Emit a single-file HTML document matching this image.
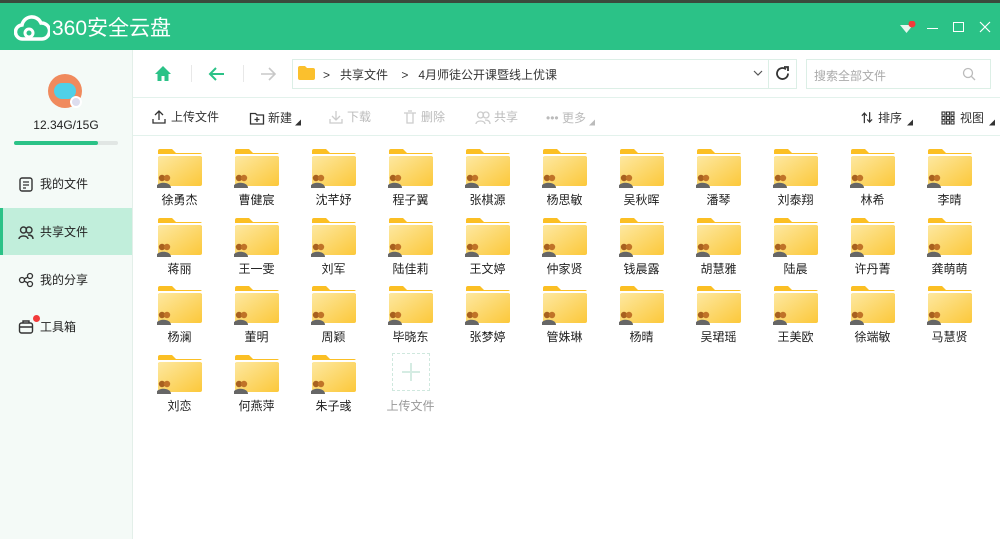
<!DOCTYPE html><html><head><meta charset="utf-8"><style>
*{margin:0;padding:0;box-sizing:border-box}
body{width:1000px;height:539px;overflow:hidden;font-family:"Liberation Sans","Noto Sans CJK SC",sans-serif;font-size:12px;color:#333;background:#fff;position:relative}
.abs{position:absolute}
#top{left:0;top:0;width:1000px;height:3px;background:#3a4a3c}
#title{left:0;top:3px;width:1000px;height:47px;background:#2bc287}
#side{left:0;top:50px;width:133px;height:489px;background:#f4faf7;border-right:1px solid #e3efe9}
.nav{position:absolute;left:0;width:132px;height:47px;display:flex;align-items:center;padding-left:18px;font-size:12px;color:#222}
.nav svg{margin-right:6px}
.tb{position:absolute;top:108px;display:flex;align-items:center;font-size:12px;color:#333}
.tb.dis{color:#bbb}
.f{position:absolute;width:77px;text-align:center}
.f svg{display:block;margin:0 auto}
.f span{display:block;margin-top:3px;font-size:12px;color:#222}
</style></head><body>
<div id="top" class="abs"></div>
<div id="title" class="abs">
<svg class="abs" style="left:14px;top:10px" width="36" height="30" viewBox="0 0 36 30"><path d="M9 26a7 7 0 0 1-1-14 10 10 0 0 1 19-2 8 8 0 0 1 1 16z" fill="none" stroke="#fff" stroke-width="3.5"/><circle cx="15" cy="20" r="4" fill="none" stroke="#fff" stroke-width="3"/></svg>
<div class="abs" style="left:52px;top:9px;color:#fff;font-size:21px;letter-spacing:0px">360安全云盘</div>
<svg class="abs" style="left:898px;top:18px" width="20" height="16"><path d="M2 4h13L8.5 12z" fill="#e6f7ef"/><path d="M2 3h13" stroke="#2bc287" stroke-width="2"/><circle cx="14" cy="3" r="3.5" fill="#f23a3a"/></svg>
<div class="abs" style="left:927px;top:25px;width:11px;height:1px;background:#fff"></div>
<div class="abs" style="left:953px;top:19px;width:11px;height:10px;border:1px solid #fff"></div>
<svg class="abs" style="left:979px;top:18px" width="12" height="12"><path d="M1 1l10 10M11 1L1 11" stroke="#fff" stroke-width="1.2"/></svg>
</div>
<div id="side" class="abs">
<div class="abs" style="left:48px;top:24px;width:34px;height:34px;border-radius:50%;background:#f08a5d"></div>
<div class="abs" style="left:54px;top:33px;width:22px;height:16px;border-radius:8px;background:#4fd0e8"></div>
<div class="abs" style="left:70px;top:46px;width:12px;height:12px;border-radius:50%;background:#dde;border:2px solid #fff"></div>
<div class="abs" style="left:0;top:68px;width:132px;text-align:center;font-size:12px;color:#222">12.34G/15G</div>
<div class="abs" style="left:14px;top:91px;width:104px;height:4px;border-radius:2px;background:#e1e6e4"><div style="width:84px;height:4px;border-radius:2px;background:#2bc287"></div></div>
<div class="nav" style="top:110px"><svg width="16" height="16"><rect x="2" y="2" width="12" height="13" rx="2" fill="none" stroke="#333" stroke-width="1.4"/><path d="M5 6h6M5 9h6M5 12h3" stroke="#333" stroke-width="1.3"/></svg>我的文件</div>
<div class="nav" style="top:158px;background:#c1eedb;border-left:3px solid #2bc287;padding-left:15px"><svg width="16" height="16"><circle cx="5.5" cy="6" r="3" fill="none" stroke="#333" stroke-width="1.4"/><circle cx="11" cy="6" r="3" fill="none" stroke="#333" stroke-width="1.4"/><path d="M1 15c0-4 9-4 9 0M10 11c3 0 5 1 5 4" fill="none" stroke="#333" stroke-width="1.4"/></svg>共享文件</div>
<div class="nav" style="top:206px"><svg width="16" height="16"><circle cx="4" cy="8" r="2.5" fill="none" stroke="#333" stroke-width="1.3"/><circle cx="12" cy="4" r="2.5" fill="none" stroke="#333" stroke-width="1.3"/><circle cx="12" cy="12" r="2.5" fill="none" stroke="#333" stroke-width="1.3"/><path d="M6 7l4-2M6 9l4 2" stroke="#333" stroke-width="1.3"/></svg>我的分享</div>
<div class="nav" style="top:253px"><svg width="16" height="16"><rect x="1.5" y="4" width="13" height="10" rx="2" fill="none" stroke="#333" stroke-width="1.4"/><path d="M5 4V2h6v2M1.5 8h13" fill="none" stroke="#333" stroke-width="1.4"/></svg>工具箱</div>
<div class="abs" style="left:33px;top:265px;width:7px;height:7px;border-radius:50%;background:#f23a3a"></div>
</div>
<svg class="abs" style="left:154px;top:65px" width="18" height="17"><path d="M9 1L1 9h2.5v7h4v-5h3v5h4V9H17z" fill="#2bc287"/></svg>
<div class="abs" style="left:191px;top:65px;width:1px;height:17px;background:#e8e8e8"></div>
<svg class="abs" style="left:208px;top:66px" width="18" height="16"><path d="M16 8H3M8 2L2 8l6 6" fill="none" stroke="#2bc287" stroke-width="2"/></svg>
<div class="abs" style="left:243px;top:65px;width:1px;height:17px;background:#e8e8e8"></div>
<svg class="abs" style="left:259px;top:66px" width="18" height="16"><path d="M2 8h13M10 2l6 6-6 6" fill="none" stroke="#c8c8c8" stroke-width="1.6"/></svg>
<div class="abs" style="left:292px;top:59px;width:477px;height:30px;border:1px solid #dcefe6;background:#fff"></div>
<svg class="abs" style="left:298px;top:66px" width="17" height="14"><path d="M0 2a2 2 0 0 1 2-2h5l2 2h6a2 2 0 0 1 2 2v8a2 2 0 0 1-2 2H2a2 2 0 0 1-2-2z" fill="#fbc02d"/></svg>
<div class="abs" style="left:323px;top:66px;font-size:12px;color:#333">&gt;&nbsp;&nbsp;&nbsp;共享文件&nbsp;&nbsp;&nbsp;&nbsp;&gt;&nbsp;&nbsp;&nbsp;4月师徒公开课暨线上优课</div>
<svg class="abs" style="left:753px;top:69px" width="10" height="8"><path d="M1 2l4 4 4-4" fill="none" stroke="#555" stroke-width="1.2"/></svg>
<div class="abs" style="left:768px;top:59px;width:29px;height:30px;border:1px solid #dcefe6"></div>
<svg class="abs" style="left:774px;top:65px" width="17" height="17"><path d="M14 8.5a5.5 5.5 0 1 1-2-4.2" fill="none" stroke="#333" stroke-width="1.8"/><path d="M10 2h4v4" fill="none" stroke="#333" stroke-width="1.8"/></svg>
<div class="abs" style="left:806px;top:59px;width:185px;height:30px;border:1px solid #dcefe6"></div>
<div class="abs" style="left:814px;top:67px;color:#aaa;font-size:12px">搜索全部文件</div>
<svg class="abs" style="left:962px;top:67px" width="14" height="14"><circle cx="6" cy="6" r="4.5" fill="none" stroke="#bbb" stroke-width="1.3"/><path d="M9.5 9.5L13 13" stroke="#bbb" stroke-width="1.3"/></svg>
<div class="abs" style="left:133px;top:97px;width:867px;height:1px;background:#e3f2ec"></div>
<div class="abs" style="left:133px;top:135px;width:867px;height:1px;background:#e3f2ec"></div>
<div class="tb" style="left:151px"><svg width="16" height="16" style="margin-right:4px"><path d="M8 11V2M4 6l4-4 4 4M2 10v4h12v-4" fill="none" stroke="#333" stroke-width="1.3"/></svg>上传文件</div>
<div class="tb" style="left:249px"><svg width="16" height="16" style="margin-right:3px"><path d="M1.5 3.5h5l1.5 1.5h6.5v9h-13z" fill="none" stroke="#333" stroke-width="1.3"/><path d="M8 7v5M5.5 9.5h5" stroke="#333" stroke-width="1.3"/></svg>新建<span style="font-size:6px;margin-left:3px;margin-top:10px">◢</span></div>
<div class="tb dis" style="left:328px"><svg width="16" height="16" style="margin-right:3px"><path d="M8 2v9M4 7l4 4 4-4M2 10v4h12v-4" fill="none" stroke="#ccc" stroke-width="1.3"/></svg>下载</div>
<div class="tb dis" style="left:402px"><svg width="16" height="16" style="margin-right:3px"><path d="M2 4h12M5 4v10h6V4M6 2h4" fill="none" stroke="#ccc" stroke-width="1.3"/></svg>删除</div>
<div class="tb dis" style="left:475px"><svg width="16" height="16" style="margin-right:3px"><circle cx="5.5" cy="6" r="3" fill="none" stroke="#ccc" stroke-width="1.3"/><circle cx="11" cy="6" r="3" fill="none" stroke="#ccc" stroke-width="1.3"/><path d="M1 15c0-4 9-4 9 0M10 11c3 0 5 1 5 4" fill="none" stroke="#ccc" stroke-width="1.3"/></svg>共享</div>
<div class="tb dis" style="left:546px">•••&nbsp;更多<span style="font-size:6px;margin-left:3px;margin-top:10px">◢</span></div>
<div class="tb" style="left:861px"><span style="font-weight:bold;margin-right:5px">⇅</span>排序<span style="font-size:6px;margin-left:5px;margin-top:10px">◢</span></div>
<div class="tb" style="left:941px"><svg width="14" height="14" style="margin-right:5px"><g fill="none" stroke="#333" stroke-width="1.1"><rect x="1" y="1" width="3" height="3"/><rect x="5.5" y="1" width="3" height="3"/><rect x="10" y="1" width="3" height="3"/><rect x="1" y="5.5" width="3" height="3"/><rect x="5.5" y="5.5" width="3" height="3"/><rect x="10" y="5.5" width="3" height="3"/><rect x="1" y="10" width="3" height="3"/><rect x="5.5" y="10" width="3" height="3"/><rect x="10" y="10" width="3" height="3"/></g></svg>视图<span style="font-size:6px;margin-left:5px;margin-top:10px">◢</span></div>
<svg width="0" height="0" style="position:absolute"><defs>
<linearGradient id="g" x1="0" y1="0" x2="1" y2="1"><stop offset="0" stop-color="#fde8a0"/><stop offset="1" stop-color="#fcc83a"/></linearGradient>
<symbol id="fd" viewBox="0 0 46 40"><path d="M1 3a2 2 0 0 1 2-2h12l4 4h24a2 2 0 0 1 2 2v4H1z" fill="#fbbf24"/><rect x="1" y="6" width="44" height="3" fill="#fff"/><rect x="1" y="8" width="44" height="30" rx="2" fill="url(#g)"/><circle cx="5" cy="30" r="3.2" fill="#a8611f"/><circle cx="10" cy="30" r="3.2" fill="#c07328"/><path d="M-1 40c0-7 15-7 15 0z" fill="#666"/></symbol></defs></svg>
<div id="grid"></div>
<script>
var n=["徐勇杰","曹健宸","沈芊妤","程子翼","张棋源","杨思敏","吴秋晖","潘琴","刘泰翔","林希","李晴","蒋丽","王一雯","刘军","陆佳莉","王文婷","仲家贤","钱晨露","胡慧雅","陆晨","许丹菁","龚萌萌","杨澜","董明","周颖","毕晓东","张梦婷","管姝琳","杨晴","吴珺瑶","王美欧","徐端敏","马慧贤","刘恋","何燕萍","朱子彧"];
var h="";n.forEach(function(t,i){var c=i%11,r=Math.floor(i/11);h+='<div class="f" style="left:'+(141+77*c)+'px;top:'+(148+68.5*r)+'px"><svg width="46" height="40"><use href="#fd"/></svg><span>'+t+'</span></div>';});
h+='<div class="f" style="left:372px;top:353px"><div style="margin:0 auto;width:38px;height:38px;border:1px dashed #cfe8de;position:relative"><div style="position:absolute;left:9px;top:17px;width:18px;height:2px;background:#d5ece3"></div><div style="position:absolute;left:17px;top:9px;width:2px;height:18px;background:#d5ece3"></div></div><span style="color:#999;margin-top:6px">上传文件</span></div>';
document.getElementById("grid").innerHTML=h;
</script>
</body></html>
